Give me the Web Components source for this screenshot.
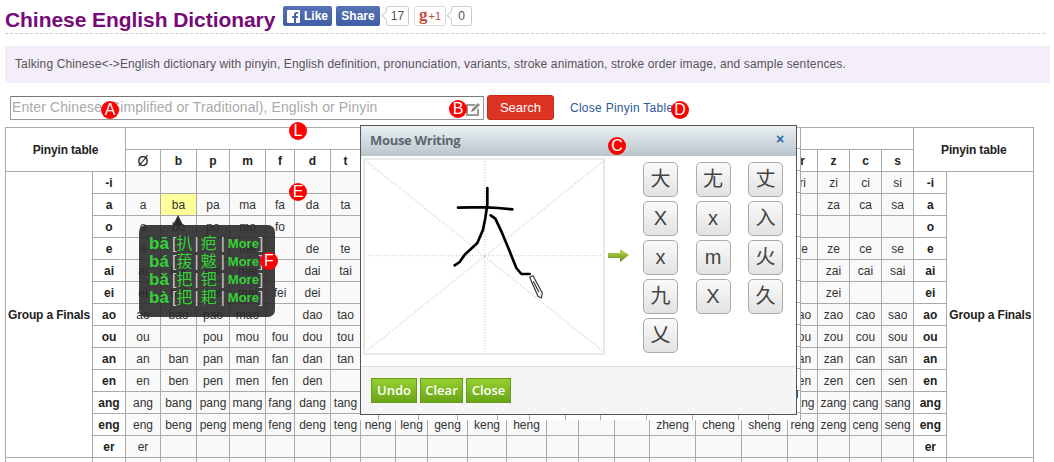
<!DOCTYPE html>
<html lang="en"><head><meta charset="utf-8"><title>Chinese English Dictionary</title>
<style>
html,body{margin:0;padding:0;overflow:hidden;background:#fff}
body{font:12px "Liberation Sans",Arial,"Noto Sans CJK SC",sans-serif;color:#333}
</style></head>
<body>
<dict-page>
  <site-header></site-header>
  <intro-box>Talking Chinese&lt;-&gt;English dictionary with pinyin, English definition, pronunciation, variants, stroke animation, stroke order image, and sample sentences.</intro-box>
  <search-bar></search-bar>
  <pinyin-table></pinyin-table>
  <write-dialog></write-dialog>
  <pinyin-tip></pinyin-tip>
  <mark-dot style="--x:110px;--y:110px">A</mark-dot>
  <mark-dot style="--x:458px;--y:109px">B</mark-dot>
  <mark-dot style="--x:617px;--y:146px">C</mark-dot>
  <mark-dot style="--x:680px;--y:110px">D</mark-dot>
  <mark-dot style="--x:298px;--y:192px">E</mark-dot>
  <mark-dot style="--x:269px;--y:261px">F</mark-dot>
  <mark-dot style="--x:298px;--y:131px">L</mark-dot>
</dict-page>
<script>
const FONT='"Liberation Sans",Arial,"Noto Sans CJK SC",sans-serif';
function def(name,html,setup){
  customElements.define(name,class extends HTMLElement{
    constructor(){super();const r=this.attachShadow({mode:'open'});r.innerHTML=html;if(setup)setup(r,this);}
  });
}
def('dict-page',`<style>:host{display:block;position:relative;width:1054px;height:462px;overflow:hidden;box-sizing:border-box;padding-left:5px}</style><slot></slot>`);

def('site-header',`<style>
:host{display:flex;align-items:flex-start;box-sizing:border-box;width:1040px;height:34px;border-bottom:1px dashed #ccc}
h1{margin:6px 0 0;font:bold 21px/28px ${FONT};color:#770a77;letter-spacing:-.06px;white-space:nowrap;width:278px}
.soc{display:flex;margin:6px 0 0 0;height:20px;font:bold 12px/20px ${FONT}}
.fb{box-sizing:border-box;height:20px;border-radius:2px;background:linear-gradient(#5573b5,#3f5ea4);color:#fff;display:flex;align-items:center;justify-content:center}
.like{width:49px;gap:4px}.share{width:44px;margin-left:4px}
.fi{width:13px;height:13px;background:#fff;border-radius:1px;display:block}
.cnt{position:relative;box-sizing:border-box;height:20px;border:1px solid #ccc;border-radius:2px;background:#fff;color:#555;font:12px/18px ${FONT};text-align:center}
.cnt::before{content:"";position:absolute;left:-4px;top:5px;width:6px;height:6px;border-left:1px solid #ccc;border-bottom:1px solid #ccc;background:#fff;transform:rotate(45deg)}
.g{box-sizing:border-box;width:32px;height:20px;margin-left:5px;border:1px solid #ddd;border-radius:2px;color:#c94a38;display:flex;align-items:center;justify-content:center;gap:1px;font:11px/18px ${FONT}}
.g b{font:bold 17px/14px "Liberation Serif",serif;margin-top:-3px}
</style><h1>Chinese English Dictionary</h1>
<div class="soc">
<div class="fb like"><svg class="fi" viewBox="0 0 13 13"><path fill="#4364ac" d="M9 13V8h1.700l.3-2H9V4.800c0-.6.2-1 1-1h1.100V2c-.3 0-.9-.1-1.600-.1C8 1.900 7 2.800 7 4.500V6H5.200v2H7v5z"/></svg>Like</div>
<div class="fb share">Share</div>
<div class="cnt" style="width:23px;margin-left:6px">17</div>
<div class="g"><b>g</b>+1</div>
<div class="cnt" style="width:21px;margin-left:5px">0</div>
</div>`);

def('intro-box',`<style>:host{display:block;box-sizing:border-box;width:1045px;height:37px;margin-top:12px;background:#f3eefa;color:#555;font:12px/37px ${FONT};letter-spacing:.12px;padding-left:10px;white-space:nowrap}</style><slot></slot>`);

def('search-bar',`<style>
:host{display:flex;align-items:flex-start;height:25px;margin-top:12px;padding-left:5px}
.in{position:relative;box-sizing:border-box;width:474px;height:24px;margin-top:1px;border:1px solid #999;border-top-color:#777;background:#fff;font:14px/21px ${FONT};letter-spacing:.1px;color:#aaa;padding-left:1px}
.in svg{position:absolute;right:2px;top:5px}
.btn{box-sizing:border-box;width:67px;height:25px;margin-left:3px;border:1px solid #c52a1c;border-radius:3px;background:#dc3322;color:#fff;font:13px/23px ${FONT};text-align:center}
a{margin:6px 0 0 16px;color:#2b5b9b;font:12px/14px ${FONT};letter-spacing:.27px;text-decoration:none}
</style>
<div class="in">Enter Chinese (Simplified or Traditional), English or Pinyin
<svg width="16" height="14" viewBox="0 0 16 14"><path d="M1 2h10l-2 2H3v8h9V8l2-2v8H1z" fill="#999"/><path d="M6 10l1-3 6-6 2 2-6 6z" fill="#888"/></svg></div>
<div class="btn">Search</div><a>Close Pinyin Table</a>`);

const WIDTHS=[87,33,35,36,33,36,29,36,30,35,32,40,39,40,32,36,35,46,46,46,30,32,32,32,33,87];
const INITIALS=['Ø','b','p','m','f','d','t','n','l','g','k','h','j','q','x','zh','ch','sh','r','z','c','s'];
const FINALS={
'-i':'. . . . . . . . . . . . . . . . . . ri zi ci si',
a:'a ba pa ma fa da ta . . . . . . . . . . . . za ca sa',
o:'o bo po mo fo . . . . . . . . . . . . . . . . .',
e:'e . . me . de te . . . . . . . . . . . re ze ce se',
ai:'ai bai pai mai . dai tai . . . . . . . . . . . . zai cai sai',
ei:'ei bei pei mei fei dei . . . . . . . . . . . . . zei . .',
ao:'ao bao pao mao . dao tao . . . . . . . . . . . rao zao cao sao',
ou:'ou . pou mou fou dou tou . . . . . . . . . . . rou zou cou sou',
an:'an ban pan man fan dan tan . . . . . . . . . . . ran zan can san',
en:'en ben pen men fen den . . . . . . . . . . . . ren zen cen sen',
ang:'ang bang pang mang fang dang tang . . . . . . . . . . . rang zang cang sang',
eng:'eng beng peng meng feng deng teng neng leng geng keng heng . . . zheng cheng sheng reng zeng ceng seng',
er:'er . . . . . . . . . . . . . . . . . . . . .'};
def('pinyin-table',`<style>
:host{display:block;margin-top:7px;width:1028px}
table{border-collapse:collapse;table-layout:fixed;width:1028px;font:12px/14px ${FONT};color:#333}
td,th{border:1px solid #aaa;height:22px;padding:0;text-align:center;white-space:nowrap;overflow:hidden;box-sizing:border-box}
td{background:#f9f9f9}
th{background:#fff;font-weight:bold;color:#222}
td.hi{background:#ffff99}
th.g,th.t{letter-spacing:-.15px}
th.o{font:14px/14px ${FONT}}
</style><table></table>`,(r)=>{
  const t=r.querySelector('table');
  let h='<colgroup>'+WIDTHS.map(w=>`<col style="width:${w}px">`).join('')+'</colgroup>';
  h+='<tr><th class="t" colspan="2" rowspan="2">Pinyin table</th><th colspan="22"></th><th class="t" colspan="2" rowspan="2">Pinyin table</th></tr>';
  h+='<tr>'+INITIALS.map(i=>`<th${i=='Ø'?' class="o"':''}>${i}</th>`).join('')+'</tr>';
  Object.keys(FINALS).forEach((k,n)=>{
    h+='<tr>';
    if(n==0)h+='<th class="g" rowspan="13">Group a Finals</th>';
    h+=`<th>${k}</th>`;
    FINALS[k].split(' ').forEach(c=>{h+=`<td${c=='ba'?' class="hi"':''}>${c=='.'?'':c}</td>`});
    h+=`<th>${k}</th>`;
    if(n==0)h+='<th class="g" rowspan="13">Group a Finals</th>';
    h+='</tr>';
  });
  h+='<tr><th></th><th></th>'+INITIALS.map(()=>'<td></td>').join('')+'<th></th><th></th></tr>';
  t.innerHTML=h;
});

const CANDS=['大','尢','丈','X','x','入','x','m','火','九','X','久','乂'];
def('write-dialog',`<style>
:host{position:absolute;left:360px;top:125px;width:441px;height:295px;background:#fff}
.ticks{position:absolute;left:0;top:0}
.dlg{position:absolute;left:0;top:0;box-sizing:border-box;width:437px;height:290px;border:1px solid #555;background:#fff;display:flex;flex-direction:column}
.hd{height:30px;flex:none;box-sizing:border-box;background:linear-gradient(#ebf1f5,#b9c4cb);display:flex;align-items:center;justify-content:space-between;padding:0 12px 2px 9px;color:#5a666e;font:bold 13px/1 "Open Sans",${FONT};letter-spacing:-.3px}
.x{color:#2a6ab0;font:bold 14px/1 ${FONT};margin-top:-2px}
.bd{flex:1;display:flex;padding:2px 0 0 2px;min-height:0}
.pad{box-sizing:border-box;width:242px;height:197px;border:2px solid #e8e8e8;flex:none}
.pad svg{display:block}
.arrow{margin:90px 0 0 3px;flex:none}
.cands{display:grid;grid-template-columns:repeat(3,35px);grid-auto-rows:35px;column-gap:17.500px;row-gap:4px;margin:4px 0 0 13px;align-content:start}
.c{box-sizing:border-box;border:1px solid #aaa;border-radius:5px;background:linear-gradient(#fafafa,#e2e2e2);color:#444;font:20px/33px ${FONT};text-align:center}
.ft{height:48px;flex:none;box-sizing:border-box;border-top:1px solid #ddd;background:#f5f5f5;display:flex;gap:3px;padding:11px 0 0 10px}
.b{box-sizing:border-box;height:25px;border:1px solid #6a9a1c;background:linear-gradient(#95cf2f,#6aa518);color:#fff;font:600 13px/23px "Open Sans",${FONT};text-align:center}
</style>
<svg class="ticks" width="441" height="295" stroke="#aaa" stroke-width="1">
<path d="M440.500 2V295M437 2.500H441M437 23.500H441M437 45.500H441M437 67.500H441M437 89.500H441M437 111.500H441M437 133.500H441M437 155.500H441M437 177.500H441M437 199.500H441M437 221.500H441M437 243.500H441M437 265.500H441M437 287.500H441"/>
<path d="M18.500 290V295M58.500 290V295M97.500 290V295M137.500 290V295M169.500 290V295M205.500 290V295M240.500 290V295M286.500 290V295M332.500 290V295M378.500 290V295M408.500 290V295"/>
<path d="M437.500 265V273" stroke="#2a5a9a"/>
</svg>
<div class="dlg">
<div class="hd"><span>Mouse Writing</span><span class="x">×</span></div>
<div class="bd">
<div class="pad"><svg width="238" height="193" viewBox="21 116 714 579">
<g stroke="#d0d0d0" stroke-width="4" stroke-dasharray="3 5" fill="none"><path d="M30 403H730M380 120V690M25 120L735 690M735 120L25 690"/></g>
<g stroke="#000" stroke-width="8" fill="none" stroke-linecap="round" stroke-linejoin="round">
<path d="M300 259L340 258L385 258L420 260L463 264"/>
<path d="M388 200L388 250L382 290L375 325L358 365L320 400L305 422L290 432"/>
<path d="M398 282L412 292L430 330L455 390L475 440L490 458L515 458"/></g>
<path d="M515 468L525 463L553 515L550 530L540 525ZM526 480L543 513" fill="#fff" stroke="#333" stroke-width="3.500"/>
</svg></div>
<svg class="arrow" width="22" height="16" viewBox="0 0 22 16"><defs><linearGradient id="ga" x1="0" y1="0" x2="0" y2="1"><stop offset="0" stop-color="#c5e05a"/><stop offset="1" stop-color="#5f8f14"/></linearGradient></defs><path d="M0 5H12V1L21 7L12 14V10H0Z" fill="url(#ga)"/></svg>
<div class="cands">${CANDS.map(c=>`<div class="c">${c}</div>`).join('')}</div>
</div>
<div class="ft"><div class="b" style="width:46px">Undo</div><div class="b" style="width:43px">Clear</div><div class="b" style="width:45px">Close</div></div>
</div>`);

const TIP=[['bā','扒','疤'],['bá','菝','魃'],['bǎ','把','钯'],['bà','把','耙']];
def('pinyin-tip',`<style>
:host{position:absolute;left:139px;top:225px;width:136px;height:92px;box-sizing:border-box;background:rgba(42,42,42,.9);border-radius:7px;padding:10px 0 0 10px;color:#36d136;font:16px/18px ${FONT};white-space:nowrap}
:host::before{content:"";position:absolute;left:34px;top:-10px;border:5px solid transparent;border-top:0;border-bottom:10px solid #2a2a2a}
.p{font:bold 17px/18px ${FONT};display:inline-block;width:23px}
.g{color:#ccc}
.m{font:bold 13px/18px ${FONT}}
.l{display:flex;height:18px}
</style>${TIP.map(t=>`<div class="l"><span class="p">${t[0]}</span><span class="g">[</span><span>${t[1]}</span><span class="g" style="margin:0 2px">|</span><span>${t[2]}</span><span class="g" style="margin:0 3px 0 4px">|</span><span class="m">More</span><span class="g">]</span></div>`).join('')}`);

def('mark-dot',`<style>:host{position:absolute;left:calc(var(--x) - 9px);top:calc(var(--y) - 9px);width:18px;height:18px;border-radius:50%;background:#f00;color:#fff;font:16px/18px ${FONT};text-align:center}</style><slot></slot>`);
</script>
</body></html>
